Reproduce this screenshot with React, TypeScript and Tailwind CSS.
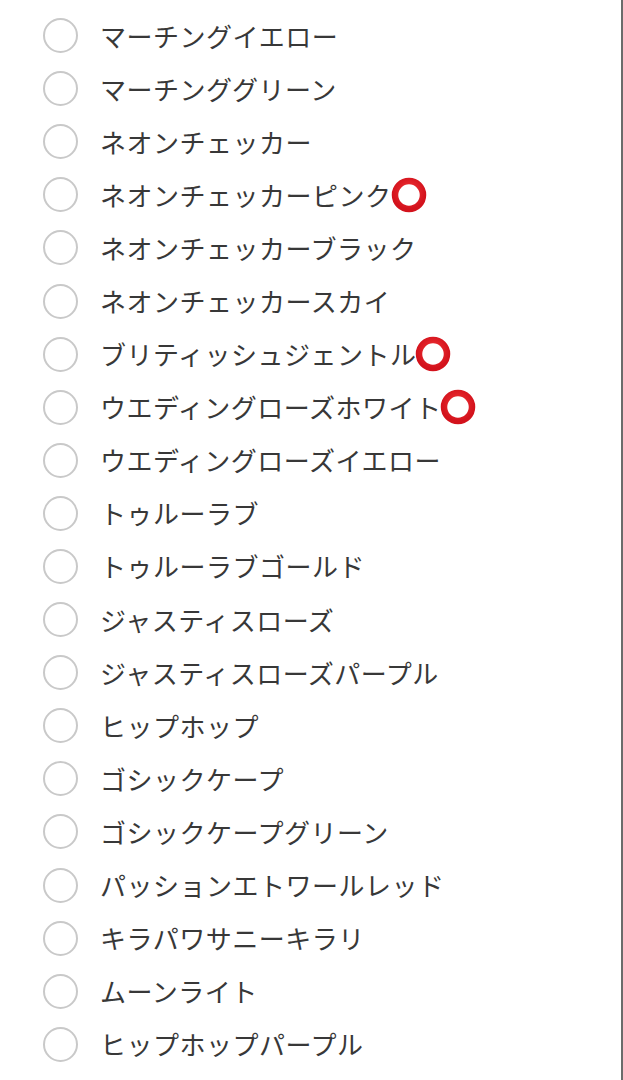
const options: { label: string; mark?: boolean }[] = [
  { label: 'マーチングイエロー' },
  { label: 'マーチンググリーン' },
  { label: 'ネオンチェッカー' },
  { label: 'ネオンチェッカーピンク', mark: true },
  { label: 'ネオンチェッカーブラック' },
  { label: 'ネオンチェッカースカイ' },
  { label: 'ブリティッシュジェントル', mark: true },
  { label: 'ウエディングローズホワイト', mark: true },
  { label: 'ウエディングローズイエロー' },
  { label: 'トゥルーラブ' },
  { label: 'トゥルーラブゴールド' },
  { label: 'ジャスティスローズ' },
  { label: 'ジャスティスローズパープル' },
  { label: 'ヒップホップ' },
  { label: 'ゴシックケープ' },
  { label: 'ゴシックケープグリーン' },
  { label: 'パッションエトワールレッド' },
  { label: 'キラパワサニーキラリ' },
  { label: 'ムーンライト' },
  { label: 'ヒップホップパープル' },
];

function RedRing() {
  return (
    <svg width="36" height="36" viewBox="0 0 36 36" className="shrink-0 -ml-[1px]">
      <defs>
        <radialGradient id="ring" cx="50%" cy="40%" r="60%">
          <stop offset="0%" stopColor="#f5383a" />
          <stop offset="100%" stopColor="#d3121c" />
        </radialGradient>
      </defs>
      <circle cx="18" cy="18" r="14" fill="none" stroke="url(#ring)" strokeWidth="6.5" />
    </svg>
  );
}

export default function App() {
  return (
    <div
      className="w-[623px] min-h-screen bg-white border-r-2 border-[#6b6b6b] pt-[9px]"
      style={{ fontFamily: '"Noto Sans CJK JP", "Noto Sans", sans-serif' }}
    >
      {options.map(opt => (
        <label key={opt.label} className="flex items-center h-[53.1px] cursor-pointer">
          <span className="ml-[43px] w-[35px] h-[35px] rounded-full border-2 border-[#c9c9c9] bg-white shrink-0" />
          <span className="ml-[22px] flex items-center text-[26px] leading-none tracking-[0.5px] text-[#383838] whitespace-nowrap">
            {opt.label}
            {opt.mark && <RedRing />}
          </span>
        </label>
      ))}
    </div>
  );
}
